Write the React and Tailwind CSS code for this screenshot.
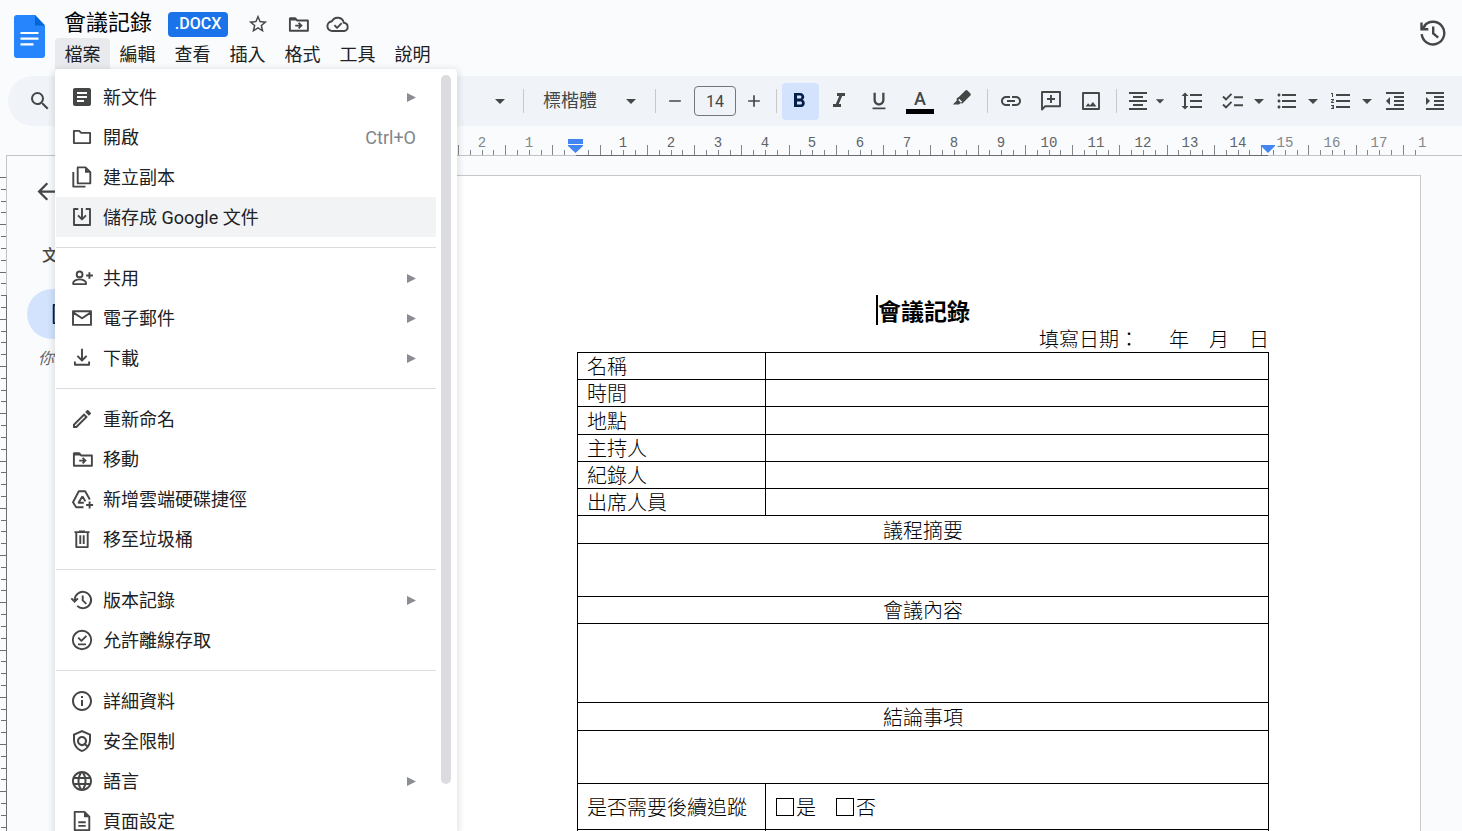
import React from "react";
import {
  MdAdd,
  MdArrowBack,
  MdArrowDropDown,
  MdArticle,
  MdFormatAlignCenter,
  MdFormatBold,
  MdFormatIndentDecrease,
  MdFormatIndentIncrease,
  MdFormatItalic,
  MdFormatLineSpacing,
  MdFormatListBulleted,
  MdFormatListNumbered,
  MdFormatUnderlined,
  MdLanguage,
  MdLink,
  MdOutlineEdit,
  MdOutlineInfo,
  MdOutlinePolicy,
  MdRemove,
  MdSearch,
  MdStarBorder,
} from "react-icons/md";

function Line({ children, className = "size-6", width = 1.9 }) {
  return (
    <svg
      viewBox="0 0 24 24"
      className={className}
      fill="none"
      stroke="currentColor"
      strokeWidth={width}
      strokeLinejoin="round"
      aria-hidden="true"
    >
      {children}
    </svg>
  );
}

const FolderIcon = () => (
  <Line>
    <path d="M3.9 5.9h5.3l2 2h8.9v10.2H3.9z" />
  </Line>
);
const CopyIcon = () => (
  <Line>
    <path d="M7.7 2.4h7.8l4.8 4.8v11.2H7.7z" />
    <path d="M15 2.4v5.3h5.3z" fill="currentColor" stroke="none" />
    <path d="M3.3 7v14.6h12.2" />
  </Line>
);
const SaveIcon = () => (
  <Line>
    <path d="M8.3 4H4v16h16V4h-4.3M12 3v11M8 10.4l4 4 4-4" />
  </Line>
);
const ShareIcon = () => (
  <Line>
    <circle cx="9.6" cy="8.4" r="2.9" />
    <path d="M3.2 18.1v-1.3c0-2.2 3.6-3.4 6.4-3.4s6.4 1.2 6.4 3.4v1.3zM19.4 6.2v6.6M16.1 9.5h6.8" />
  </Line>
);
const MailIcon = () => (
  <Line>
    <path d="M3 5.2h18v13.7H3zM3.4 6.6l8.6 5.6 8.6-5.6" />
  </Line>
);
const DownloadIcon = () => (
  <Line>
    <path d="M12 2.8v11.6M7.4 9.9l4.6 4.6 4.6-4.6M4.9 15.4v3.4h14.2v-3.4" />
  </Line>
);
const MoveIcon = () => (
  <Line>
    <path d="M3.9 6.4h5.4l1.8 2.1h10.8v10.3h-18z" />
    <path d="M3.9 5.4h5.5l2.3 3H3.9z" fill="currentColor" stroke="none" />
    <path d="M9.2 13.6h6M12.6 10.8l2.8 2.8-2.8 2.8" strokeLinejoin="miter" />
  </Line>
);
const DriveIcon = () => (
  <Line>
    <path d="M13.500 20.300H6.200L3 15.200 8.800 4.300h6.400l4.600 8.200M12.400 9.200l-3.800 6.500h5.200M12.400 9.200l3 5.200" />
    <path d="M19.600 14.500v7M16.100 18h7" />
  </Line>
);
const TrashIcon = () => (
  <Line>
    <path d="M4.500 5.100h15M9 4.400h6M6.300 5v15.100h11.400V5M10.300 8.200v8.800M13.700 8.200v8.800" />
  </Line>
);
const HistoryIcon = ({ className = "size-6" }) => (
  <Line className={className}>
    <path d="M4.700 12a8.200 8.200 0 1 1 2.500 5.900M1.300 10.300l3.300 3.300 3.300-3.300M12.700 7.500v4.900l3.600 3.500" strokeLinejoin="miter" />
  </Line>
);
const VersionIcon = () => (
  <svg viewBox="0 0 26 26" className="size-[26px]" fill="none" stroke="currentColor" strokeWidth="2.400" aria-hidden="true">
    <path d="M1.700 14.200A11.300 11.300 0 1 0 4 6.200M1.500 2.500v6.800h6.800M2.200 8.600l3.300-3.300M13.200 6.500v7l5 4.200" />
  </svg>
);
const OfflineIcon = () => (
  <Line>
    <circle cx="12" cy="12" r="9.2" />
    <path d="M8 16.400h8M8.200 9.600l3.200 3.200 5-5" />
  </Line>
);
const PageIcon = () => (
  <Line>
    <path d="M4.700 2.900h9.800l4.800 4.800v13.400H4.700z" />
    <path d="M14 2.900v5.300h5.300z" fill="currentColor" stroke="none" />
    <path d="M8.300 13.200h7.400M8.300 16.900h7.400" />
  </Line>
);
const CloudIcon = () => (
  <Line>
    <path d="M6.600 19A4.900 4.900 0 0 1 6 9.200 6.300 6.300 0 0 1 17.800 10.700A4.200 4.200 0 0 1 18.300 19z" />
    <path d="M8.400 13.200l2.600 2.600 4.700-4.700" />
  </Line>
);
const HighlightIcon = () => (
  <svg viewBox="0 0 24 24" className="size-6" aria-hidden="true">
    <path
      d="M9.300 9.400l6.100-5.900a1.500 1.500 0 0 1 2.100 0l2.900 2.900a1.500 1.500 0 0 1 0 2.100l-6 6.100-2 1.900-2.100-.2-1.300 1.300H2.800l4-4-.2-2z"
      fill="currentColor"
    />
    <path d="M9.200 11.700l3 3-1.200 1-2.700-2.700z" fill="#f0f4f9" />
  </svg>
);
const CommentIcon = () => (
  <Line>
    <path d="M3 20.500V3h18v14.200H6.200z" />
    <path d="M12 6v8M8 10h8" />
  </Line>
);
const ImageIcon = () => (
  <Line>
    <path d="M4 4h16v16H4z" />
    <path d="M6.500 17.500l2.600-3.200 2 2 2.800-3.300 3.600 4.500z" fill="currentColor" stroke="none" />
  </Line>
);
const ChecklistIcon = () => (
  <Line>
    <path d="M2 7.500l3 3 5.500-5.700M2 15.500l3 3 5.500-5.700M13 8.300h9M13 16.300h9" strokeLinejoin="miter" />
  </Line>
);

const menuGroups = [
  [
    { icon: MdArticle, label: "新文件", sub: true },
    { icon: FolderIcon, label: "開啟", shortcut: "Ctrl+O" },
    { icon: CopyIcon, label: "建立副本" },
    { icon: SaveIcon, label: "儲存成 Google 文件", active: true },
  ],
  [
    { icon: ShareIcon, label: "共用", sub: true },
    { icon: MailIcon, label: "電子郵件", sub: true },
    { icon: DownloadIcon, label: "下載", sub: true },
  ],
  [
    { icon: MdOutlineEdit, label: "重新命名" },
    { icon: MoveIcon, label: "移動" },
    { icon: DriveIcon, label: "新增雲端硬碟捷徑" },
    { icon: TrashIcon, label: "移至垃圾桶" },
  ],
  [
    { icon: HistoryIcon, label: "版本記錄", sub: true },
    { icon: OfflineIcon, label: "允許離線存取" },
  ],
  [
    { icon: MdOutlineInfo, label: "詳細資料" },
    { icon: MdOutlinePolicy, label: "安全限制" },
    { icon: MdLanguage, label: "語言", sub: true },
    { icon: PageIcon, label: "頁面設定" },
  ],
];

function MenuItem({ item }) {
  const Icon = item.icon;
  return (
    <button
      role="menuitem"
      className={
        "flex h-10 w-full items-center gap-[9px] pr-5 pl-[14px] text-left text-lg leading-6 text-[#202124] " +
        (item.active ? "bg-[#f1f3f4]" : "")
      }
    >
      <span className="shrink-0 text-[#444746]">
        <Icon className="size-6" />
      </span>
      <span className="flex-1 pt-0.5">{item.label}</span>
      {item.shortcut && <span className="pt-0.5 text-[#80868b]">{item.shortcut}</span>}
      {item.sub && (
        <svg viewBox="0 0 9 9" className="size-[9px] text-[#8a8d91]" aria-hidden="true">
          <path d="M0 0l9 4.500L0 9z" fill="currentColor" />
        </svg>
      )}
    </button>
  );
}

function FileMenu() {
  return (
    <div className="absolute top-full left-0 z-20 flex h-[calc(100vh-69px)] w-[402px] overflow-hidden rounded-t bg-white pt-2 shadow-[0_2px_6px_2px_rgba(60,64,67,0.15)]">
      <div role="menu" aria-label="檔案" className="w-[381px] pl-px">
        {menuGroups.map((group, i) => (
          <div key={i}>
            {i > 0 && <hr className="my-[10px] border-t border-[#dadce0]" />}
            {group.map((item) => (
              <MenuItem key={item.label} item={item} />
            ))}
          </div>
        ))}
      </div>
      <div className="-mt-0.5 ml-[5px] h-[94%] w-[10px] rounded-full bg-[#dadce0]" />
    </div>
  );
}

function DocsLogo() {
  return (
    <svg viewBox="0 0 31 43" className="h-[43px] w-[31px]" aria-hidden="true">
      <path d="M3 0h18l10 10.500V40a3 3 0 0 1-3 3H3a3 3 0 0 1-3-3V3a3 3 0 0 1 3-3z" fill="#2684fc" />
      <path d="M21 0l10 10.500H21z" fill="#0066da" />
      <path d="M6.500 18h18M6.500 23.700h18M6.500 29.400h13" stroke="#fff" strokeWidth="2.200" />
    </svg>
  );
}

function Header() {
  const rest = ["編輯", "查看", "插入", "格式", "工具", "說明"];
  return (
    <header className="flex h-[76px] shrink-0 items-start">
      <a href="#home" aria-label="文件" className="mt-[15px] mr-[10px] ml-[14px]">
        <DocsLogo />
      </a>
      <div>
        <div className="flex h-[38px] items-center pt-[10px] pl-[9px]">
          <h1 className="mr-4 mb-0.5 text-[22px] leading-7 text-black">會議記錄</h1>
          <span className="mr-[10px] flex h-[25px] w-[60px] items-center justify-center rounded bg-[#1a73e8] text-base font-medium text-white">
            .DOCX
          </span>
          <button aria-label="加上星號" className="flex w-10 justify-center">
            <MdStarBorder className="size-[22px]" />
          </button>
          <button aria-label="移動" className="flex w-10 justify-center">
            <MoveIcon />
          </button>
          <button aria-label="雲端狀態" className="flex w-10 justify-center">
            <CloudIcon />
          </button>
        </div>
        <nav className="relative flex h-[31px] text-lg leading-6 text-[#202124]">
          <button aria-expanded="true" className="w-[55px] rounded-t bg-[#e8eaed] pt-0.5 text-center">
            檔案
          </button>
          {rest.map((name) => (
            <button key={name} className="w-[55px] pt-0.5 text-center">
              {name}
            </button>
          ))}
          <FileMenu />
        </nav>
      </div>
      <button aria-label="查看版本記錄" className="mt-5 mr-4 ml-auto">
        <VersionIcon />
      </button>
    </header>
  );
}

function Tool({ label, className = "w-10", children }) {
  return (
    <button aria-label={label} className={"flex h-[37px] shrink-0 items-center justify-center " + className}>
      {children}
    </button>
  );
}

const Sep = ({ className }) => <span className={"h-6 w-px shrink-0 bg-[#c7c9cc] " + className} />;

function Toolbar() {
  return (
    <div role="toolbar" className="ml-2 flex h-[50px] shrink-0 items-center overflow-hidden rounded-l-full bg-[#f0f4f9]">
      <Tool label="搜尋選單" className="ml-3 w-10">
        <MdSearch className="size-6" />
      </Tool>
      <span className="w-[428px] shrink-0" />
      <Tool label="樣式" className="w-6">
        <MdArrowDropDown className="size-6" />
      </Tool>
      <Sep className="ml-[11px]" />
      <button className="flex h-[37px] shrink-0 items-center pl-[19px] text-lg">
        <span className="w-[76px] text-left">標楷體</span>
        <MdArrowDropDown className="size-6" />
      </button>
      <Sep className="ml-3" />
      <Tool label="縮小字型" className="w-[38px]">
        <MdRemove className="size-5" />
      </Tool>
      <input
        aria-label="字型大小"
        defaultValue="14"
        className="h-[30px] w-[42px] shrink-0 rounded border border-[#747775] bg-transparent text-center text-base"
      />
      <Tool label="放大字型" className="w-9">
        <MdAdd className="size-5" />
      </Tool>
      <Sep className="ml-1" />
      <Tool label="粗體" className="ml-[5px] w-[37px] rounded bg-[#d3e3fd] pr-1 text-[#041e49]">
        <MdFormatBold className="size-6" />
      </Tool>
      <Tool label="斜體">
        <MdFormatItalic className="size-6" />
      </Tool>
      <Tool label="底線">
        <MdFormatUnderlined className="size-[22px]" />
      </Tool>
      <Tool label="文字顏色" className="w-[42px]">
        <span className="flex w-7 flex-col items-center border-b-[5px] border-black text-lg leading-5 font-medium">A</span>
      </Tool>
      <Tool label="醒目顯示顏色" className="w-[41px] pb-1">
        <HighlightIcon />
      </Tool>
      <Sep className="ml-[5px]" />
      <Tool label="插入連結" className="ml-[3px] w-10">
        <MdLink className="size-6" />
      </Tool>
      <Tool label="新增註解">
        <CommentIcon />
      </Tool>
      <Tool label="插入圖片">
        <ImageIcon />
      </Tool>
      <Sep className="ml-[5px]" />
      <Tool label="對齊" className="ml-[9px] w-6">
        <MdFormatAlignCenter className="size-6" />
      </Tool>
      <Tool label="對齊選項" className="w-5">
        <MdArrowDropDown className="size-6" />
      </Tool>
      <Tool label="行距" className="w-11">
        <MdFormatLineSpacing className="size-6" />
      </Tool>
      <Tool label="檢查清單" className="ml-[5px] w-7">
        <ChecklistIcon />
      </Tool>
      <Tool label="檢查清單選項" className="w-6">
        <MdArrowDropDown className="size-6" />
      </Tool>
      <Tool label="項目符號清單" className="ml-0.5 w-7">
        <MdFormatListBulleted className="size-6" />
      </Tool>
      <Tool label="項目符號選項" className="w-6">
        <MdArrowDropDown className="size-6" />
      </Tool>
      <Tool label="編號清單" className="ml-0.5 w-7">
        <MdFormatListNumbered className="size-6" />
      </Tool>
      <Tool label="編號選項" className="w-6">
        <MdArrowDropDown className="size-6" />
      </Tool>
      <Tool label="減少縮排" className="w-8">
        <MdFormatIndentDecrease className="size-6" />
      </Tool>
      <Tool label="增加縮排" className="w-12">
        <MdFormatIndentIncrease className="size-6" />
      </Tool>
    </div>
  );
}

const CM = 47.25;
const ORIGIN = 576;

function HorizontalRuler() {
  const ticks = [];
  for (let q = -10; q <= 71; q++) {
    if (q !== 0) ticks.push(q);
  }
  const labels = [];
  for (let n = -2; n <= 17; n++) {
    if (n !== 0) labels.push(n);
  }
  return (
    <svg className="h-[30px] w-full shrink-0" aria-label="水平尺規">
      {ticks.map((q) => {
        const x = Math.round(ORIGIN + (q * CM) / 4);
        return (
          <rect
            key={q}
            x={x}
            y={Math.abs(q % 4) === 2 ? 19 : 24}
            width="1"
            height={Math.abs(q % 4) === 2 ? 10 : 5}
            fill="#80868b"
          />
        );
      })}
      {labels.map((n) => (
        <text
          key={n}
          x={Math.round(ORIGIN + n * CM)}
          y="21"
          textAnchor="middle"
          fill={n < 0 || n > 14 ? "#80868b" : "#5f6368"}
          className="font-['Liberation_Mono',monospace] text-sm"
        >
          {Math.abs(n)}
        </text>
      ))}
      <text x="1418" y="21" fill="#80868b" className="font-['Liberation_Mono',monospace] text-sm">
        1
      </text>
      <rect x="6" y="29" width="100%" height="1" fill="#c0c3c7" />
      <rect x="576" y="29" width="692" height="1" fill="#6b6f73" />
      <path d="M568 13h15v5h-15zM568 19h15v1l-7.500 7-7.500-7z" fill="#4285f4" />
      <path d="M1261 19h14v1l-7 7-7-7z" fill="#4285f4" />
    </svg>
  );
}

function VerticalRuler() {
  const ticks = Array.from({ length: 60 }, (_, i) => i);
  return (
    <svg className="h-full w-[7px] shrink-0" aria-label="垂直尺規">
      {ticks.map((i) => (
        <rect
          key={i}
          x={i % 4 === 0 ? 0 : 1}
          y={Math.round(21 + (i * CM) / 4)}
          width="6"
          height="1"
          fill="#6b6f73"
        />
      ))}
      <rect x="6" y="0" width="1" height="139" fill="#c0c3c7" />
      <rect x="6" y="139" width="1" height="100%" fill="#6b6f73" />
    </svg>
  );
}

function Outline() {
  return (
    <aside className="w-[421px] shrink-0 overflow-hidden pt-[22px] pl-5">
      <button aria-label="關閉" className="ml-[6px] block">
        <MdArrowBack className="size-[27px]" />
      </button>
      <h2 className="mt-[39px] ml-[15px] text-base leading-6 font-medium">文</h2>
      <button aria-label="分頁" className="mt-[21px] flex h-[50px] w-full items-center rounded-full bg-[#d3e3fd] pl-[22px] text-[#041e49]">
        <PageIcon />
      </button>
      <p className="mt-2 ml-[11px] text-base leading-6 text-[#5f6368] italic">你</p>
    </aside>
  );
}

const infoRows = [
  ["名稱", "h-[27px]"],
  ["時間", "h-[27px]"],
  ["地點", "h-[28px]"],
  ["主持人", "h-[27px]"],
  ["紀錄人", "h-[27px]"],
  ["出席人員", "h-[27px]"],
];

const sections = [
  ["議程摘要", "h-[28px]", "h-[53px]"],
  ["會議內容", "h-[27px]", "h-[79px]"],
  ["結論事項", "h-[28px]", "h-[53px]"],
];

function Choice({ label }) {
  return (
    <label className="flex items-center gap-0.5">
      <input type="checkbox" className="size-[18px] appearance-none border border-black" />
      {label}
    </label>
  );
}

function DocumentPage() {
  return (
    <article className="mt-[19px] mr-[41px] h-[1403px] flex-1 border border-[#c7c9cc] bg-white pt-[119px] pr-[151px] pl-[148px] font-['DFKai-SB','BiauKai','Noto_Sans_CJK_TC',serif] text-black">
      <div className="flex h-[31px] justify-center">
        <h2 className="h-[30px] border-l-2 border-black text-[23px] leading-[30px] font-bold">會議記錄</h2>
      </div>
      <p className="flex h-[26px] justify-end gap-5 text-xl leading-[26px] font-light">
        <span className="mr-[10px]">填寫日期：</span>
        <span>年</span>
        <span>月</span>
        <span>日</span>
      </p>
      <table className="w-full table-fixed border-collapse text-xl leading-[26px] font-light">
        <colgroup>
          <col className="w-[188px]" />
          <col />
        </colgroup>
        <tbody>
          {infoRows.map(([label, height]) => (
            <tr key={label} className={height}>
              <th scope="row" className="border border-black py-0 pl-[9px] text-left font-light">
                {label}
              </th>
              <td className="border border-black p-0" />
            </tr>
          ))}
          {sections.map(([label, head, body]) => (
            <React.Fragment key={label}>
              <tr className={head}>
                <th colSpan={2} className="border border-black p-0 text-center font-light">
                  {label}
                </th>
              </tr>
              <tr className={body}>
                <td colSpan={2} className="border border-black p-0" />
              </tr>
            </React.Fragment>
          ))}
          <tr className="h-[46px]">
            <th scope="row" className="border border-black py-0 pl-[9px] text-left font-light whitespace-nowrap">
              是否需要後續追蹤
            </th>
            <td className="border border-black py-0 pl-[10px]">
              <div className="flex gap-5">
                <Choice label="是" />
                <Choice label="否" />
              </div>
            </td>
          </tr>
          <tr className="h-[46px]">
            <td className="border border-black p-0" />
            <td className="border border-black p-0" />
          </tr>
        </tbody>
      </table>
    </article>
  );
}

export default function App() {
  return (
    <div className="flex h-screen flex-col overflow-hidden bg-[#f9fbfd] font-[Roboto,'Noto_Sans_CJK_TC',sans-serif] text-[#444746]">
      <Header />
      <Toolbar />
      <HorizontalRuler />
      <main className="flex min-h-0 flex-1">
        <VerticalRuler />
        <Outline />
        <DocumentPage />
      </main>
    </div>
  );
}
